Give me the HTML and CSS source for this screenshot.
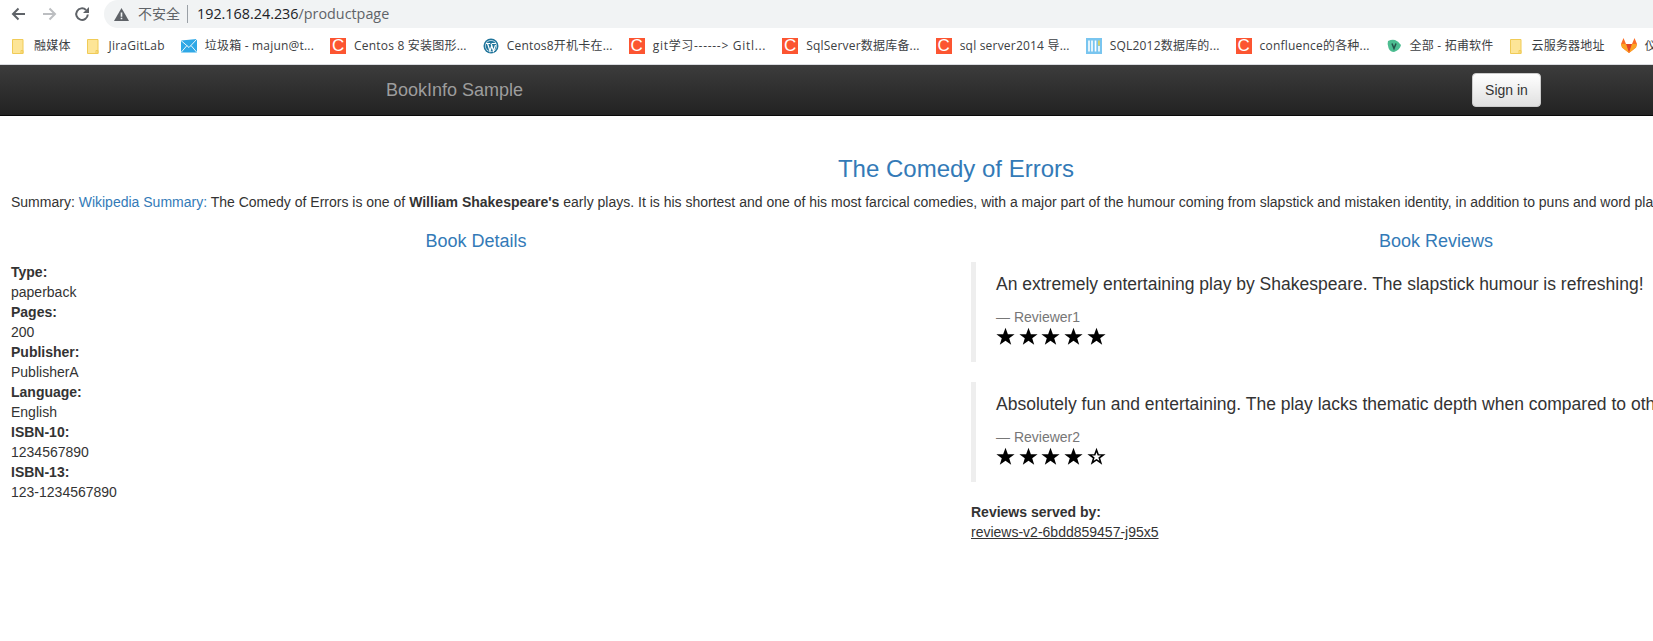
FILE: index.html
```html
<!DOCTYPE html>
<html lang="en">
<head>
    <meta charset="UTF-8">
    <title>Simple Bookstore App</title>
    <link rel="stylesheet" href="styles.css">
</head>
<body>
    <!-- Browser toolbar -->
    <div class="toolbar">
        <svg class="tool-icon" viewBox="0 0 16 16"><path d="M15 8H3.500M8.500 2.500 3 8l5.500 5.500" fill="none" stroke="#5f6368" stroke-width="2"/></svg>
        <svg class="tool-icon" viewBox="0 0 16 16"><path d="M1 8h11.500M7.500 2.500 13 8l-5.500 5.500" fill="none" stroke="#bcbec1" stroke-width="2"/></svg>
        <svg class="tool-icon" viewBox="0 0 16 16"><path d="M13.800 8.500A5.800 5.800 0 1 1 12 3.900" fill="none" stroke="#5f6368" stroke-width="2"/><path d="M15 1v6H9z" fill="#5f6368"/></svg>
        <div class="omnibox">
            <svg class="warn-icon" viewBox="0 0 15 13"><path d="M7.500 0 15 13H0z" fill="#5f6368"/><path d="M6.700 4.500h1.600v4.200H6.700zM6.700 9.700h1.600v1.500H6.700z" fill="#f1f3f4"/></svg>
            <span class="not-secure">不安全</span>
            <span class="omni-sep"></span>
            <span class="url">192.168.24.236<span class="url-path">/productpage</span></span>
        </div>
    </div>

    <!-- Bookmarks -->
    <div class="bookmarks">
        <a class="bookmark"><svg class="bm-icon folder" viewBox="0 0 12 15"><path d="M.5.500h10.500v14H.5z" fill="#fde597" stroke="#f0cb57"/><path d="M9 11.500h2v3H9z" fill="none" stroke="#f0cb57"/></svg><span class="bm-label">融媒体</span></a>
        <a class="bookmark"><svg class="bm-icon folder" viewBox="0 0 12 15"><path d="M.5.500h10.500v14H.5z" fill="#fde597" stroke="#f0cb57"/><path d="M9 11.500h2v3H9z" fill="none" stroke="#f0cb57"/></svg><span class="bm-label">JiraGitLab</span></a>
        <a class="bookmark"><svg class="bm-icon" viewBox="0 0 16 16"><path d="M0 2.500 16 1v13.500H0z" fill="#2fa8e6"/><path d="M0 2.500l8 7 8-8.500M0 14.500l6-7M16 14.500l-6-7" fill="none" stroke="#e8f6fd"/></svg><span class="bm-label">垃圾箱 - majun@t...</span></a>
        <a class="bookmark"><span class="csdn">C</span><span class="bm-label">Centos 8 安装图形...</span></a>
        <a class="bookmark"><svg class="bm-icon" viewBox="0 0 16 16"><circle cx="8" cy="8" r="7.500" fill="#21759b"/><circle cx="8" cy="8" r="6" fill="#d3e5ee"/><circle cx="8" cy="8" r="5.300" fill="#21759b"/><path d="M3 5.500h4M9 5.500h4M4.500 5.500 7 13 9 7M8 5.500l2.500 7.500 2-6" fill="none" stroke="#fff" stroke-width="1.200"/></svg><span class="bm-label">Centos8开机卡在...</span></a>
        <a class="bookmark"><span class="csdn">C</span><span class="bm-label bm-label-wide">git学习------&gt; Gitl...</span></a>
        <a class="bookmark"><span class="csdn">C</span><span class="bm-label">SqlServer数据库备...</span></a>
        <a class="bookmark"><span class="csdn">C</span><span class="bm-label">sql server2014 导...</span></a>
        <a class="bookmark"><svg class="bm-icon" viewBox="0 0 16 16"><path d="M0 0h16v16H0z" fill="#79c5ef"/><path d="M3 2.500v11M6 2.500v11M9.500 2.500v11" fill="none" stroke="#fff" stroke-width="1.600"/><path d="M13 8v5.500" stroke="#fff" stroke-width="1.600"/><path d="M13 2.500v5" stroke="#e8d44d" stroke-width="1.600"/></svg><span class="bm-label">SQL2012数据库的...</span></a>
        <a class="bookmark"><span class="csdn">C</span><span class="bm-label">confluence的各种...</span></a>
        <a class="bookmark"><svg class="bm-icon" viewBox="0 0 16 16"><path d="M2 3Q6 1 9 2t6 5Q14 12 8 14 4 14 2.500 10 1 6 2 3z" fill="#4dbd91"/><path d="M6 5.500 8 10.500l2-5" fill="none" stroke="#25534a" stroke-width="1.500"/></svg><span class="bm-label">全部 - 拓甫软件</span></a>
        <a class="bookmark"><svg class="bm-icon folder" viewBox="0 0 12 15"><path d="M.5.500h10.500v14H.5z" fill="#fde597" stroke="#f0cb57"/><path d="M9 11.500h2v3H9z" fill="none" stroke="#f0cb57"/></svg><span class="bm-label">云服务器地址</span></a>
        <a class="bookmark"><svg class="bm-icon" viewBox="0 0 16 16"><path d="M8 15 1 9.500 0 6 2.500 0 5 6h6l2.500-6L16 6l-1 3.500z" fill="#fc6d26"/><path d="M8 15 5 6h6z" fill="#e24329"/><path d="M8 15 1 9.500 0 6h5zM8 15l7-5.500L16 6h-5z" fill="#fca326"/></svg><span class="bm-label">仪表盘</span></a>
    </div>

    <!-- Navbar -->
    <nav class="navbar">
        <a class="brand">BookInfo Sample</a>
        <button class="sign-in">Sign in</button>
    </nav>

    <div class="page">
        <h3 class="book-title">The Comedy of Errors</h3>
        <p class="summary">Summary: <a class="link">Wikipedia Summary:</a> The Comedy of Errors is one of <b>William Shakespeare's</b> early plays. It is his shortest and one of his most farcical comedies, with a major part of the humour coming from slapstick and mistaken identity, in addition to puns and word play.</p>

        <div class="columns">
            <div class="col">
                <h4 class="col-title">Book Details</h4>
                <dl class="details">
                    <dt>Type:</dt><dd>paperback</dd>
                    <dt>Pages:</dt><dd>200</dd>
                    <dt>Publisher:</dt><dd>PublisherA</dd>
                    <dt>Language:</dt><dd>English</dd>
                    <dt>ISBN-10:</dt><dd>1234567890</dd>
                    <dt>ISBN-13:</dt><dd>123-1234567890</dd>
                </dl>
            </div>
            <div class="col">
                <h4 class="col-title">Book Reviews</h4>
                <blockquote class="review">
                    <p>An extremely entertaining play by Shakespeare. The slapstick humour is refreshing!</p>
                    <small>— Reviewer1</small>
                    <div class="stars">
                        <svg class="star" viewBox="0 0 24 24"><use href="#star-shape"/></svg>
                        <svg class="star" viewBox="0 0 24 24"><use href="#star-shape"/></svg>
                        <svg class="star" viewBox="0 0 24 24"><use href="#star-shape"/></svg>
                        <svg class="star" viewBox="0 0 24 24"><use href="#star-shape"/></svg>
                        <svg class="star" viewBox="0 0 24 24"><use href="#star-shape"/></svg>
                    </div>
                </blockquote>
                <blockquote class="review">
                    <p>Absolutely fun and entertaining. The play lacks thematic depth when compared to other plays by Shakespeare.</p>
                    <small>— Reviewer2</small>
                    <div class="stars">
                        <svg class="star" viewBox="0 0 24 24"><use href="#star-shape"/></svg>
                        <svg class="star" viewBox="0 0 24 24"><use href="#star-shape"/></svg>
                        <svg class="star" viewBox="0 0 24 24"><use href="#star-shape"/></svg>
                        <svg class="star" viewBox="0 0 24 24"><use href="#star-shape"/></svg>
                        <svg class="star" viewBox="0 0 24 24"><path fill-rule="evenodd" d="M12 1l3 8h8.500l-6.800 5.200 2.500 8.300L12 17.500 4.800 22.500l2.500-8.300L.5 9H9zM12 6.750l-1.500 4H6.250l3.400 2.600-1.250 4.150L12 15l3.600 2.500-1.250-4.150 3.400-2.600H13.500z"/></svg>
                    </div>
                </blockquote>
                <dl class="served">
                    <dt>Reviews served by:</dt>
                    <dd><u>reviews-v2-6bdd859457-j95x5</u></dd>
                </dl>
            </div>
        </div>
    </div>

    <svg class="defs" width="0" height="0"><defs><path id="star-shape" d="M12 1l3 8h8.500l-6.800 5.200 2.500 8.300L12 17.500 4.800 22.500l2.500-8.300L.5 9H9z"/></defs></svg>
</body>
</html>
```

FILE: styles.css
```css
html, body {
    height: 100%;
    overflow: hidden;
}

body {
    margin: 0;
    background-color: #fff;
    font-family: "Liberation Sans", "Noto Sans CJK SC", sans-serif;
    font-size: 14px;
    line-height: 20px;
    color: #333;
}

/* browser chrome */
.toolbar {
    display: flex;
    align-items: center;
    height: 28px;
    padding-left: 10px;
    gap: 16px;
}

.tool-icon {
    width: 16px;
    height: 16px;
    flex: none;
}

.omnibox {
    display: flex;
    align-items: center;
    flex: 1;
    height: 28px;
    margin-left: -2px;
    padding-left: 10px;
    background-color: #f1f3f4;
    border-radius: 14px 0 0 14px;
    font-family: "Open Sans", "Noto Sans CJK SC", sans-serif;
}

.warn-icon {
    width: 15px;
    height: 13px;
}

.not-secure {
    margin-left: 9px;
    font-size: 14px;
    color: #5f6368;
}

.omni-sep {
    width: 1px;
    height: 18px;
    margin: 0 9px 0 7px;
    background-color: #9aa0a6;
}

.url {
    font-size: 14.350px;
    color: #202124;
}

.url-path {
    color: #5f6368;
}

.bookmarks {
    display: flex;
    align-items: center;
    height: 36px;
    padding-left: 12px;
    gap: 16px;
    border-bottom: 1px solid #dadce0;
    white-space: nowrap;
    overflow: hidden;
    font-family: "Open Sans", "Noto Sans CJK SC", sans-serif;
    font-size: 12px;
    color: #3c4043;
}

.bookmark {
    display: flex;
    align-items: center;
    gap: 8px;
    flex: none;
}

.bm-label {
    letter-spacing: 0.200px;
}

.bm-label-wide {
    letter-spacing: 0.700px;
}

.bm-icon {
    width: 16px;
    height: 16px;
    flex: none;
}

.bm-icon.folder {
    width: 12px;
    height: 15px;
    margin-right: 2px;
}

.csdn {
    display: flex;
    justify-content: center;
    align-items: center;
    width: 16px;
    height: 16px;
    background-color: #fc5531;
    color: #fff;
    font-family: "Liberation Sans", sans-serif;
    font-size: 17px;
}

/* navbar */
.navbar {
    display: flex;
    align-items: center;
    box-sizing: border-box;
    height: 51px;
    padding-left: 386px;
    background-image: linear-gradient(to bottom, #3c3c3c 0, #222 100%);
    border-bottom: 1px solid #080808;
}

.brand {
    font-size: 18px;
    color: #9d9d9d;
}

.sign-in {
    box-sizing: border-box;
    height: 34px;
    margin-left: 949px;
    padding: 6px 12px;
    background-image: linear-gradient(to bottom, #fff 0, #e0e0e0 100%);
    border: 1px solid #ccc;
    border-radius: 4px;
    font-family: inherit;
    font-size: 14px;
    white-space: nowrap;
    color: #333;
}

/* page content, wider than the window */
.page {
    width: 1920px;
    margin-left: -4px;
    padding-top: 40px;
}

.book-title {
    margin: 0;
    font-size: 24px;
    font-weight: 500;
    line-height: 26px;
    text-align: center;
    color: #337ab7;
}

.summary {
    margin: 10px 0 0;
    padding-left: 15px;
    white-space: nowrap;
}

.link {
    color: #337ab7;
}

.columns {
    display: grid;
    grid-template-columns: 960px 960px;
    margin-top: 19px;
}

.col {
    padding: 0 15px;
}

.col-title {
    margin: 0 0 11px;
    font-size: 18px;
    font-weight: 500;
    line-height: 20px;
    text-align: center;
    color: #337ab7;
}

.details, .served {
    margin: 0;
}

dt {
    font-weight: bold;
}

dd {
    margin: 0;
}

.review {
    box-sizing: border-box;
    height: 100px;
    margin: 0 0 20px;
    padding: 10px 20px;
    border-left: 5px solid #eee;
    font-size: 17.500px;
    line-height: 25px;
    white-space: nowrap;
}

.review p {
    margin: 0 0 10px;
}

.review small {
    display: block;
    font-size: 14px;
    line-height: 20px;
    color: #777;
}

.stars {
    display: flex;
    gap: 3.700px;
}

.star {
    width: 19px;
    height: 19px;
    fill: #000;
}

.served {
    margin-top: 20px;
}

.defs {
    position: absolute;
}
```
